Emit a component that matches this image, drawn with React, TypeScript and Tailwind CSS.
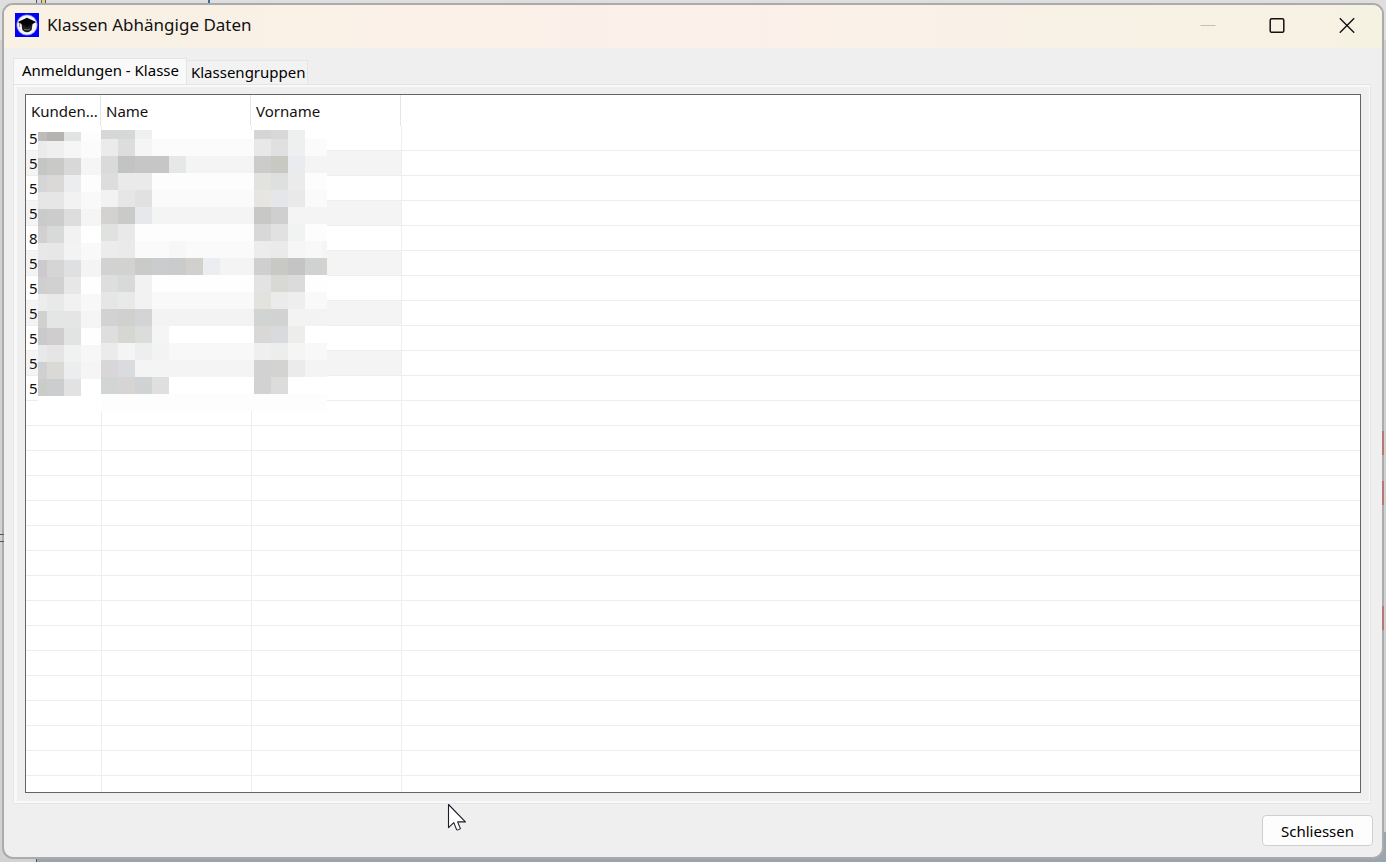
import { useState } from "react";

const idColumns = [
  { x: 0, w: 9 },
  { x: 9, w: 17 },
  { x: 26, w: 17 },
  { x: 43, w: 20 },
];

const idTiles = [
  ["#bebbbb", "#b5b2b2", "#e1e4e2", "#fdfdfd"],
  ["#ebebeb", "#efefef", "#f6f6f6", "#fbfbfb"],
  ["#c5c5c3", "#c9c9c8", "#d8d8d8", "#f5f5f5"],
  ["#d5d5d5", "#dad9d7", "#ebedef", "#fdfdfd"],
  ["#e6e6e6", "#e6e6e6", "#f2f2f2", "#f9f9f9"],
  ["#cacaca", "#cccccc", "#dddddd", "#f5f5f5"],
  ["#d2d0d0", "#d7dad8", "#f2f2f2", "#ffffff"],
  ["#e8e8e8", "#e7e7e7", "#f3f3f3", "#f9f9f9"],
  ["#cccacc", "#d5d5d5", "#dee0e2", "#f4f4f4"],
  ["#cfcfcf", "#d1d1d1", "#e7e7e7", "#fefefe"],
  ["#ededed", "#e9e9e9", "#f1f1f1", "#f8f8f8"],
  ["#d1d1cf", "#e3e6e4", "#e5e5e5", "#f5f5f5"],
  ["#cacaca", "#d0cdce", "#e2e4e3", "#fefefe"],
  ["#e9e9e9", "#e5e5e5", "#f0f2f1", "#f7f7f7"],
  ["#d0d0d0", "#dad9d6", "#ebedef", "#f5f5f5"],
  ["#cbcbca", "#cccdcf", "#e2e2e2", "#ffffff"],
];

const nameTiles: { base: string; name: string[]; first: string[] }[] = [
  { base: "#ffffff", name: ["#d6d8d7", "#d6d8d7", "#eef1ee"], first: ["#d5d5d5", "#d8d8d8", "#edf0ef"] },
  { base: "#fbfbfb", name: ["#ebebeb", "#dddddd", "#f5f5f5"], first: ["#e8e8e8", "#e0e0e0", "#edf0ef"] },
  { base: "#f4f4f4", name: ["#dadada", "#c2c4c3", "#c6c6c4", "#c6c6c6", "#e5e8e6"], first: ["#cccccc", "#c9c9c4", "#e9ebee"] },
  { base: "#fdfdfd", name: ["#dddddd", "#eaeaea", "#eaeaea"], first: ["#e2e2df", "#dde0df", "#ebebeb"] },
  { base: "#fafafa", name: ["#f2f2f2", "#e6e6e6", "#e1e1e1"], first: ["#e7e5e2", "#e4e6e9", "#e9e9e9"] },
  { base: "#f4f4f4", name: ["#d3d2d0", "#cacac9", "#e7e8eb"], first: ["#c8c8c6", "#cfcfcf"] },
  { base: "#fdfdfd", name: ["#dfe2de", "#e9e9e9"], first: ["#d8d8d8", "#e1e1e1", "#f0f3f2"] },
  { base: "#fafafa", name: ["#ececec", "#eaeaea", "#fafafa", "#fafafa", "#f7f7f7"], first: ["#ececec", "#eaeaea", "#f6f6f6", "#f8f8f8", "#f5f5f5"] },
  { base: "#f4f4f4", name: ["#d2d2d2", "#d2d2d0", "#cacac9", "#cacccd", "#cacccb", "#d1d0cd", "#ecedf0"], first: ["#cfcfcf", "#c8c8c5", "#c4c4c4", "#cfd2d0", "#d2d4d0"] },
  { base: "#fefefe", name: ["#dedede", "#d8dad9", "#f2f2f2"], first: ["#e3e3e3", "#d8d8d5", "#dbdbdb"] },
  { base: "#f9f9f9", name: ["#e6e6e6", "#e7eae8", "#f2f2f2"], first: ["#e2e3df", "#ebebeb", "#eeeeee"] },
  { base: "#f3f3f3", name: ["#d2d2d2", "#d0d0ce", "#d4d4d6"], first: ["#d0d4d2", "#d2d2d2"] },
  { base: "#ffffff", name: ["#dedede", "#d5d7d3", "#daddda", "#f5f5f5"], first: ["#dad8d6", "#d9dadd", "#ededeb"] },
  { base: "#f8f8f8", name: ["#ebebeb", "#f4f4f4", "#eeeeee", "#f2f4f3"], first: ["#efefef", "#ededed", "#f5f5f5"] },
  { base: "#f4f4f4", name: ["#d8d6d8", "#d9dbde"], first: ["#d2d2d2", "#d3d3d1", "#ebebeb"] },
  { base: "#ffffff", name: ["#d3d5d4", "#d7d5d3", "#cfd3d4", "#dfdfdf"], first: ["#d2d2d2", "#dcdcdc"] },
  { base: "#fdfdfd", name: [], first: [] },
];

const TILE = 17;
const NAME_X = 63;
const FIRST_X = 216;
const MOSAIC_W = 289;

/** Pixelated tiles that hide the personal data in the list. */
function Mosaic() {
  return (
    <svg
      aria-hidden="true"
      className="pointer-events-none absolute top-[35px] left-3"
      width="289"
      height="283"
      viewBox="0 0 289 283"
      shapeRendering="crispEdges"
    >
      <rect width={NAME_X} height="283" fill="#ffffff" />
      {idTiles.map((row, r) =>
        row.map((fill, c) => (
          <rect
            key={`${r}-${c}`}
            x={idColumns[c].x}
            y={r === 0 ? 2 : 11 + (r - 1) * TILE}
            width={idColumns[c].w}
            height={r === 0 ? 9 : TILE}
            fill={fill}
          />
        )),
      )}
      {nameTiles.map((row, r) => {
        const y = r === 0 ? 0 : 9 + (r - 1) * TILE;
        const h = r === 0 ? 9 : TILE;
        return (
          <g key={r}>
            <rect x={NAME_X} y={y} width={MOSAIC_W - NAME_X} height={h} fill={row.base} />
            {row.name.map((fill, i) => (
              <rect key={i} x={NAME_X + i * TILE} y={y} width={TILE} height={h} fill={fill} />
            ))}
            {row.first.map((fill, i) => (
              <rect key={i} x={FIRST_X + i * TILE} y={y} width={TILE} height={h} fill={fill} />
            ))}
          </g>
        );
      })}
    </svg>
  );
}

function AppLogo() {
  return (
    <svg width="24" height="24" viewBox="0 0 24 24" aria-hidden="true">
      <rect width="24" height="24" fill="#0000f6" />
      <circle cx="12" cy="12" r="10.6" fill="#7c7cf0" />
      <circle cx="12" cy="12" r="9.8" fill="#f4f4fa" />
      <path d="M6.4 10.5 7.4 17Q12 21.4 16.6 17L17.6 10.5Z" fill="#1c1c1c" />
      <path d="M2.8 9 12 4.8l9.2 4.2L12 14Z" fill="#050505" />
      <path d="M9 16.2q3 1.4 6 0" stroke="#777" strokeWidth="0.9" fill="none" />
      <path d="M4.6 10v4" stroke="#777" strokeWidth="0.8" />
    </svg>
  );
}

function TitleBar() {
  return (
    <header className="flex h-[43px] shrink-0 items-center bg-linear-to-r from-[#f9f1e4] via-[#fbf0ea] to-[#f6f2e2] pb-[3px] pl-[11px]">
      <AppLogo />
      <h1 className="ml-2 flex-1 text-[17px] leading-6 text-[#111]">Klassen Abhängige Daten</h1>
      <button type="button" aria-label="Minimieren" disabled className="flex h-full w-[69px] items-center justify-center">
        <svg width="16" height="16" viewBox="0 0 16 16">
          <path d="M0.5 8.5h15" stroke="#c5bfb5" />
        </svg>
      </button>
      <button type="button" aria-label="Maximieren" className="flex h-full w-[69px] items-center justify-center">
        <svg width="16" height="16" viewBox="0 0 16 16" fill="none">
          <rect x="1.2" y="1.7" width="13.6" height="13.6" rx="1.6" stroke="#111" strokeWidth="1.5" />
        </svg>
      </button>
      <button type="button" aria-label="Fenster schliessen" className="flex h-full w-[71px] items-center justify-center">
        <svg width="16" height="16" viewBox="0 0 16 16">
          <path d="M0.8 1.3l14.4 14.4M15.2 1.3L0.8 15.7" stroke="#111" strokeWidth="1.4" />
        </svg>
      </button>
    </header>
  );
}

const registrations = ["5", "5", "5", "5", "8", "5", "5", "5", "5", "5", "5"];
const listRows = Array.from({ length: 60 }, (_, i) => registrations[i] ?? "");

function RegistrationList() {
  return (
    <div className="relative min-h-0 flex-1 overflow-hidden border border-[#646464] bg-white">
      <table className="w-full table-fixed border-separate border-spacing-0 text-left text-[15px] leading-5 text-[#111]">
        <colgroup>
          <col className="w-[75px]" />
          <col className="w-[150px]" />
          <col className="w-[150px]" />
          <col />
        </colgroup>
        <thead>
          <tr className="h-[31px]">
            <th scope="col" className="border-r border-[#e5e5e5] p-0 pl-[5px] font-normal">Kunden...</th>
            <th scope="col" className="border-r border-[#e5e5e5] p-0 pl-[5px] font-normal">Name</th>
            <th scope="col" className="border-r border-[#e5e5e5] p-0 pl-[5px] font-normal">Vorname</th>
            <td className="p-0" />
          </tr>
        </thead>
        <tbody>
          {listRows.map((id, i) => {
            const striped = i < registrations.length && i % 2 === 1;
            const cell = striped
              ? "border-b border-[#eeeeee] bg-[#f4f4f4] p-0"
              : "border-b border-[#eeeeee] p-0";
            return (
              <tr key={i} className="h-[25px]">
                <td className={`${cell} pl-[3px]`}>{id}</td>
                <td className={`${cell} border-l`} />
                <td className={`${cell} border-l`} />
                <td className="border-b border-l border-[#eeeeee] p-0" />
              </tr>
            );
          })}
        </tbody>
      </table>
      <Mosaic />
    </div>
  );
}

function Desktop() {
  return (
    <div aria-hidden="true" className="absolute inset-0 flex flex-col bg-[#d2d2d2]">
      <div className="flex h-10 bg-[#dedede] pl-9">
        <div className="w-px bg-[#555]" />
        <div className="w-1 bg-[#d4d4e2]" />
        <div className="w-px bg-[#666]" />
        <div className="w-[3px] bg-[#e5cf80]" />
        <div className="w-px bg-[#555]" />
        <div className="w-[162px]" />
        <div className="w-0.5 bg-[#2c6ea0]" />
      </div>
      <div className="flex-1" />
      <div className="flex h-[30px]">
        <div className="w-9 bg-[#d2d2d2]" />
        <div className="w-px bg-[#555]" />
        <div className="flex-1 bg-[#9aa5b0]" />
      </div>
    </div>
  );
}

type Tab = "klasse" | "gruppen";

export default function App() {
  const [tab, setTab] = useState<Tab>("klasse");
  return (
    <div className="relative flex h-screen min-h-80 flex-col overflow-hidden px-0.5 pt-[3px] pb-[3px] font-['Noto_Sans','Open_Sans',sans-serif]">
      <Desktop />
      <main className="relative flex min-h-0 flex-1 flex-col overflow-hidden rounded-[11px] border-2 border-[#ababab] bg-[#efefef]">
        <TitleBar />
        <div className="flex min-h-0 flex-1 flex-col px-[9px] pt-[10px] pb-[11px]">
          <div role="tablist" className="flex items-end text-[15px] leading-5 text-black">
            <button
              type="button"
              role="tab"
              id="tab-klasse"
              aria-controls="panel"
              aria-selected={tab === "klasse"}
              onClick={() => setTab("klasse")}
              className="h-[26px] border border-b-0 border-[#e5e5e5] bg-[#f9f9f9] pr-[7px] pb-1 pl-2 whitespace-nowrap"
            >
              Anmeldungen - Klasse
            </button>
            <button
              type="button"
              role="tab"
              id="tab-gruppen"
              aria-controls="panel"
              aria-selected={tab === "gruppen"}
              onClick={() => setTab("gruppen")}
              className="h-6 border border-b-0 border-l-0 border-[#e5e5e5] bg-[#f2f2f2] pr-px pb-0.5 pl-1 whitespace-nowrap"
            >
              Klassengruppen
            </button>
          </div>
          <section
            id="panel"
            role="tabpanel"
            aria-labelledby={tab === "klasse" ? "tab-klasse" : "tab-gruppen"}
            className="mr-0.5 flex min-h-0 flex-1 flex-col border border-[#e5e5e5] bg-[#f9f9f9] py-0.5 pr-px pl-[3px]"
          >
            <div className="flex min-h-0 flex-1 flex-col bg-[#efefef] px-2 pt-[7px] pb-2">
              <RegistrationList />
            </div>
          </section>
          <footer className="flex justify-end pt-[11px]">
            <button
              type="button"
              className="h-[31px] w-[111px] rounded-sm border border-[#cfcfcf] bg-[#fdfdfd] text-[15px] leading-5 text-black"
            >
              Schliessen
            </button>
          </footer>
        </div>
      </main>
      <div aria-hidden="true" className="absolute top-[431px] right-0.5 h-6 w-0.5 bg-[#b87777]" />
      <div aria-hidden="true" className="absolute top-[481px] right-0.5 h-6 w-0.5 bg-[#b87777]" />
      <div aria-hidden="true" className="absolute top-[606px] right-0.5 h-6 w-0.5 bg-[#b87777]" />
      <div aria-hidden="true" className="absolute top-[534px] left-0 h-2 w-1 border-y border-[#555]" />
      <svg aria-hidden="true" className="absolute top-[803px] left-[447px]" width="20" height="29" viewBox="0 0 20 29">
        <path
          d="M1.5 1.5V24.6L6.8 19.6 9.6 26.6Q10.6 27.6 13.4 25.6L10.6 18.9H18.4Z"
          fill="#fff"
          stroke="#1c1c28"
          strokeWidth="1.1"
          strokeLinejoin="round"
        />
      </svg>
    </div>
  );
}
